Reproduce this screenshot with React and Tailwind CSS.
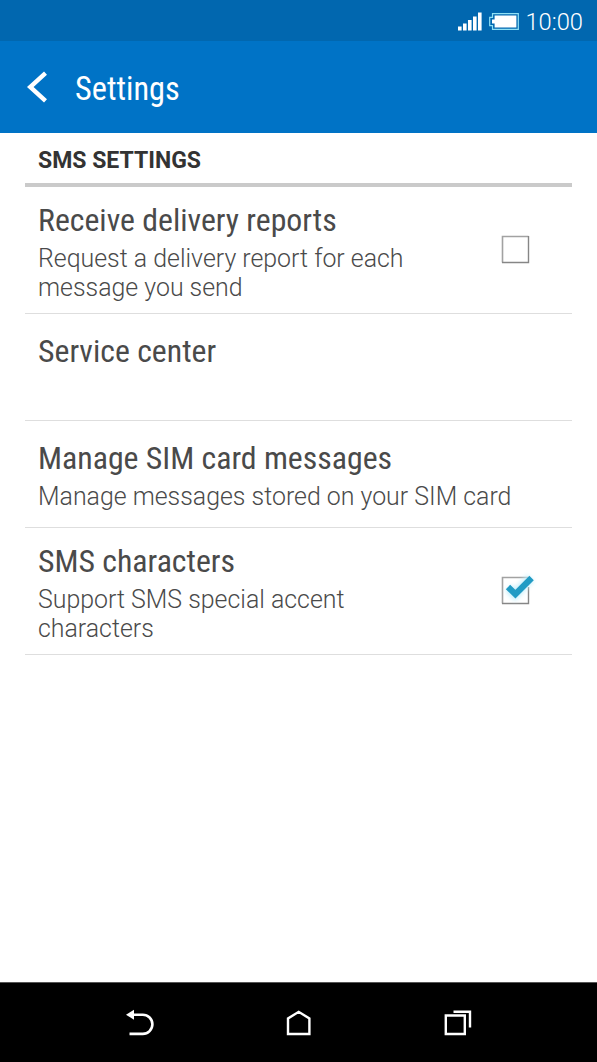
import React, { useState } from 'react';

const SETTINGS = [
  {
    id: 'reports',
    title: 'Receive delivery reports',
    lines: ['Request a delivery report for each', 'message you send'],
    checkbox: true,
    rowClass: 'h-[127px] pt-[14px]',
  },
  { id: 'center', title: 'Service center', lines: [], rowClass: 'h-[107px] pt-[18px]' },
  {
    id: 'sim',
    title: 'Manage SIM card messages',
    lines: ['Manage messages stored on your SIM card'],
    rowClass: 'h-[107px] pt-[18px]',
  },
  {
    id: 'characters',
    title: 'SMS characters',
    lines: ['Support SMS special accent', 'characters'],
    checkbox: true,
    rowClass: 'h-[127px] pt-[14px]',
  },
];

const StatusBar = () => (
  <div className="flex h-[41px] shrink-0 items-center justify-end bg-[#0167af] pt-0.5 pr-[14px] text-white">
    <svg width="24" height="19" viewBox="0 0 24 19" fill="currentColor">
      <rect x="0" y="14.5" width="3.6" height="4" />
      <rect x="5" y="11.5" width="3.6" height="7" />
      <rect x="10" y="8" width="3.6" height="10.5" />
      <rect x="15" y="4.5" width="3.6" height="14" />
      <rect x="20" y="0.5" width="3.6" height="18" />
    </svg>
    <svg className="ml-[7px]" width="30" height="17" viewBox="0 0 30 17">
      <path d="M3.5 .7h25.8v15.6H3.5v-3.6H.7V4.3h2.8z" fill="none" stroke="#8fe0f5" strokeWidth="1.2" />
      <path d="M5.6 2.6h21.8v11.8H5.6v-3.8H3V6.4h2.6z" fill="#fff" />
    </svg>
    <span className="ml-1.5 pt-0.5 text-[23.7px] leading-none font-light">10:00</span>
  </div>
);

const ActionBar = () => (
  <div className="flex h-[92px] shrink-0 items-center bg-[#0073c6] text-white">
    <svg className="ml-[27px]" width="22" height="32" viewBox="0 0 22 32" fill="none">
      <path d="M18.5 2.2L3.2 16l15.3 13.8" stroke="#fff" strokeWidth="4.4" />
    </svg>
    <h1 className="ml-[26px] pt-1 text-[32.3px] leading-none [font-family:'Roboto_Condensed',Roboto,sans-serif] [font-stretch:75%]">
      Settings
    </h1>
  </div>
);

const Checkbox = ({ checked, label, onChange }) => (
  <button
    type="button"
    role="checkbox"
    aria-checked={checked}
    aria-label={label}
    onClick={onChange}
    className="mt-[28px] mr-[31px] h-[40px] w-[46px] shrink-0"
  >
    <svg width="46" height="40" viewBox="0 0 46 40" fill="none">
      <path d="M7.5 33.5v-26h26" stroke="#a2a2a2" strokeWidth="1.6" />
      <path d={checked ? 'M33.5 17v16.5H7' : 'M33.5 7v26.5H7'} stroke="#868686" strokeWidth="1.4" />
      {checked && (
        <>
          <path d="M13.5 18l6.5 6.5L35.5 8" stroke="#c5effb" strokeWidth="9" className="blur-[2px]" />
          <path d="M13 17l7.4 7.2L36.6 8" stroke="#219bc4" strokeWidth="6.2" />
        </>
      )}
    </svg>
  </button>
);

const SettingRow = ({ item, checked, onToggle }) => (
  <li className={`flex justify-between border-b border-[#dedede] pl-[13px] ${item.rowClass}`}>
    <div className="whitespace-nowrap">
      <h3 className="mb-[5px] text-[31.8px] leading-[38px] text-[#4a4a4a] [font-family:'Roboto_Condensed',Roboto,sans-serif] [font-stretch:75%]">
        {item.title}
      </h3>
      {item.lines.map((line) => (
        <p key={line} className="text-[24.9px] leading-[29px] font-light text-[#4a4a4a]">{line}</p>
      ))}
    </div>
    {item.checkbox && <Checkbox checked={checked} label={item.title} onChange={onToggle} />}
  </li>
);

const NavBar = () => (
  <div className="flex h-[80px] shrink-0 items-center justify-center gap-[119px] border-t border-[#555] bg-black text-white">
    <svg width="40" height="40" viewBox="0 0 40 40" fill="none" stroke="currentColor" strokeWidth="2.6">
      <path d="M14 11.7h8.8a9.6 9.6 0 0 1 0 19.2H9.5" />
      <path d="M6 11.7l8-5v10z" fill="currentColor" stroke="none" />
    </svg>
    <svg width="40" height="40" viewBox="0 0 40 40" fill="none" stroke="currentColor" strokeWidth="2.4">
      <path d="M9 31V15.5L19.7 8.8l10.7 6.7V31z" />
    </svg>
    <svg width="40" height="40" viewBox="0 0 40 40" fill="none" stroke="currentColor" strokeWidth="2.4">
      <path d="M7.8 12.5h19V31h-19zM15.5 8.7H32v15.8" />
    </svg>
  </div>
);

const App = () => {
  const [checked, setChecked] = useState({ reports: false, characters: true });

  return (
    <div className="flex h-[1062px] w-[597px] flex-col overflow-hidden bg-white font-[Roboto,sans-serif]">
      <StatusBar />
      <ActionBar />
      <main className="flex-1 px-[25px]">
        <h2 className="h-[54px] border-b-4 border-[#cacaca] pt-[14px] pl-[13px] text-[23px] leading-[27px] font-bold text-[#333]">
          SMS SETTINGS
        </h2>
        <ul>
          {SETTINGS.map((item) => (
            <SettingRow
              key={item.id}
              item={item}
              checked={!!checked[item.id]}
              onToggle={() => setChecked((prev) => ({ ...prev, [item.id]: !prev[item.id] }))}
            />
          ))}
        </ul>
      </main>
      <NavBar />
    </div>
  );
};

export default App;
